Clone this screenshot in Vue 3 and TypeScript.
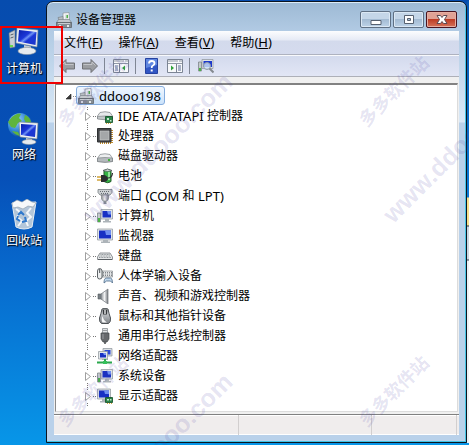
<script setup lang="ts">
interface Device {
  icon: string
  label: string
}

const shortcuts: Device[] = [
  { icon: 'desk-computer', label: '计算机' },
  { icon: 'desk-network', label: '网络' },
  { icon: 'desk-trash', label: '回收站' },
]

const menus = [
  { label: '文件', key: 'F' },
  { label: '操作', key: 'A' },
  { label: '查看', key: 'V' },
  { label: '帮助', key: 'H' },
]

const devices: Device[] = [
  { icon: 'ide', label: 'IDE ATA/ATAPI 控制器' },
  { icon: 'cpu', label: '处理器' },
  { icon: 'disk', label: '磁盘驱动器' },
  { icon: 'battery', label: '电池' },
  { icon: 'port', label: '端口 (COM 和 LPT)' },
  { icon: 'computer', label: '计算机' },
  { icon: 'monitor', label: '监视器' },
  { icon: 'keyboard', label: '键盘' },
  { icon: 'hid', label: '人体学输入设备' },
  { icon: 'sound', label: '声音、视频和游戏控制器' },
  { icon: 'mouse', label: '鼠标和其他指针设备' },
  { icon: 'usb', label: '通用串行总线控制器' },
  { icon: 'netcard', label: '网络适配器' },
  { icon: 'computer', label: '系统设备' },
  { icon: 'display', label: '显示适配器' },
]

// Latin runs are set one size larger than the Chinese text around them
function runs(label: string): { text: string; latin: boolean }[] {
  return (label.match(/[\x20-\x7e]+|[^\x20-\x7e]+/g) ?? []).map((text) => ({
    text,
    latin: /^[\x20-\x7e]/.test(text),
  }))
}
</script>

<template>
  <div class="desktop">
    <svg class="defs" aria-hidden="true">
      <defs>
        <linearGradient id="g-screen" x1="0" y1="0" x2="1" y2="1">
          <stop offset="0" stop-color="#0a1fa8" />
          <stop offset=".4" stop-color="#1c37d8" />
          <stop offset=".5" stop-color="#6f93f4" />
          <stop offset=".6" stop-color="#1c37d8" />
          <stop offset="1" stop-color="#1a36c8" />
        </linearGradient>
        <linearGradient id="g-metal" x1="0" y1="0" x2="1" y2="0">
          <stop offset="0" stop-color="#8b8f94" />
          <stop offset=".5" stop-color="#f1f2f3" />
          <stop offset="1" stop-color="#74787d" />
        </linearGradient>
        <linearGradient id="g-grey" x1="0" y1="0" x2="0" y2="1">
          <stop offset="0" stop-color="#e6e8ea" />
          <stop offset="1" stop-color="#7d8287" />
        </linearGradient>
        <radialGradient id="g-globe" cx=".35" cy=".3" r=".8">
          <stop offset="0" stop-color="#9fd8ff" />
          <stop offset=".6" stop-color="#2b7fd0" />
          <stop offset="1" stop-color="#0d3f86" />
        </radialGradient>
      </defs>
      <symbol id="i-desk-computer" viewBox="0 0 32 32">
        <path d="M1 6l6-3v17l-5 1z" fill="#c9ced3" stroke="#6e757c" stroke-width=".6" />
        <path d="M2.500 8l3-1M2.500 11l3-1" stroke="#5c646c" />
        <path d="M2 18h3v2H2z" fill="#69d84c" />
        <path d="M9 1l21 2-1 17L8 16z" fill="#e9eef3" stroke="#7d8894" stroke-width=".6" />
        <path d="M11 3l17.500 2-1 13L10 14.500z" fill="url(#g-screen)" />
        <path d="M16 18l7 1.500v4h-7z" fill="#c5ccd4" />
        <ellipse cx="19" cy="24" rx="9" ry="3.600" fill="#e7ebef" stroke="#8d969f" stroke-width=".6" />
      </symbol>
      <symbol id="i-desk-network" viewBox="0 0 32 32">
        <circle cx="12" cy="12" r="12" fill="url(#g-globe)" />
        <path d="M4 4q6-5 9-3l-2 4 3 3-4 2-3 5-4-1-3-5zM17 2q5 2 6 7l-5 1-2-4zM4 18l6 1 2 4q-5-1-8-5z" fill="#5fb53c" />
        <path d="M11 9l19 1-1 16-17-2z" fill="#edf1f4" stroke="#6f7a86" stroke-width=".6" />
        <path d="M13 11l15 1-1 12-14-2z" fill="url(#g-screen)" />
        <path d="M18 25l6 1v3h-6z" fill="#c5ccd4" />
        <ellipse cx="21" cy="29" rx="7" ry="2.500" fill="#e7ebef" stroke="#8d969f" stroke-width=".6" />
      </symbol>
      <symbol id="i-desk-trash" viewBox="0 0 32 32">
        <path d="M4 4l24-1-4 25q-8 4-16 0z" fill="#c6d2dc" fill-opacity=".9" stroke="#e7eef4" />
        <path d="M4 4l5-3 5 2 5-3 5 3 4 1-3 4-5-1-5 3-5-2-5 1z" fill="#f6f8fa" stroke="#8c9aa7" stroke-width=".6" />
        <path d="M8 10l4 3-3 5 5 4-4 5M23 9l-4 5 4 4-5 4 2 5" stroke="#f4f7fa" stroke-width="2" fill="none" />
        <path d="M10 16l3-3 3 3M17 18l1 4-4 1M12 22l-3-2 1-3" stroke="#2f78cc" stroke-width="2" fill="none" />
      </symbol>
      <symbol id="i-manager" viewBox="0 0 16 16">
        <path d="M7 1l6-.5.500 8H7z" fill="#f3f5f6" stroke="#8b9298" stroke-width=".7" />
        <path d="M9 2.500h3v5H9z" fill="#d8dde0" />
        <path d="M10.500 3h1.500v3h-1.500z" fill="#4fb247" />
        <path d="M2 5.500l5-1v4H3z" fill="#b8bec3" stroke="#71787e" stroke-width=".6" />
        <path d="M2.500 7.500h11l2 3H.5z" fill="#c4c9cd" stroke="#72797f" stroke-width=".6" />
        <path d="M.5 10.500h15v5H.5z" fill="#868d93" stroke="#545b61" stroke-width=".7" />
        <path d="M2 11.500h12" stroke="#c9ced2" />
        <path d="M3 13h2v2H3zM11 13h2v2h-2z" fill="#e5e8ea" />
      </symbol>
      <symbol id="i-ide" viewBox="0 0 16 16">
        <path d="M3 4.500q5-1.500 10 0L15.500 8v2.500q-7.500 1.500-15 0V8z" fill="#e6e8ea" stroke="#85898d" stroke-width=".8" />
        <path d="M.5 8.500q7.500-1 15 0v2.500q-7.500 1.500-15 0z" fill="#c3c7ca" stroke="#777c80" stroke-width=".6" />
        <path d="M8.500 8.500h7v6h-7z" fill="#288447" stroke="#0f4a23" stroke-width=".8" />
        <path d="M10 10h2v2h-2zM13 12h1.500v1.500H13z" fill="#c7e8cd" />
        <path d="M9 15.500h5" stroke="#d0a63a" stroke-dasharray="1 1" />
      </symbol>
      <symbol id="i-cpu" viewBox="0 0 16 16">
        <path d="M15 2v13H2" fill="none" stroke="#c08a28" stroke-width="2" stroke-dasharray="1 1" />
        <path d="M.5.5h13.500V14H.5z" fill="#45474a" stroke="#2f3133" />
        <path d="M3 3h9v9H3z" fill="#a4a7a9" stroke="#cfd1d2" stroke-width=".6" />
      </symbol>
      <symbol id="i-disk" viewBox="0 0 16 16">
        <path d="M3 6.500q5-1.500 10 0l2.500 4v3q-7.500 1.500-15 0v-3z" fill="#eceeef" stroke="#8a8f93" stroke-width=".8" />
        <path d="M.5 10q7.500-1 15 0v3.500q-7.500 1.500-15 0z" fill="#b5babd" stroke="#72777b" stroke-width=".6" />
        <path d="M11 11h2v2h-2z" fill="#43b53d" />
      </symbol>
      <symbol id="i-battery" viewBox="0 0 16 16">
        <path d="M7 2.500q4-2.500 7 0v11q-3 2.500-7 0z" fill="#35b344" stroke="#245b2b" />
        <path d="M6 2.500q4.500-3 9 0-4 2-9 0z" fill="#d9dddf" stroke="#4b5155" stroke-width=".7" />
        <path d="M12 4v8" stroke="#b5f3b6" stroke-width="1.500" />
        <path d="M0 9h4M0 12h4" stroke="#d0a239" stroke-width="1.400" />
        <path d="M4 7h3q4 1 4 3.500T7 14H4z" fill="#2c2e30" />
        <path d="M11 10q4 0 4.500-5" stroke="#2c2e30" stroke-width="1.200" fill="none" />
      </symbol>
      <symbol id="i-port" viewBox="0 0 16 16">
        <path d="M1 1.500h14v3l-2 2.500H3L1 4.500z" fill="#cdd1d4" stroke="#777d82" stroke-width=".8" />
        <path d="M3 3.500h10M4 5.500h8" stroke="#686e73" stroke-dasharray="1 1" />
        <path d="M4.500 7h7v4L10 13H6l-1.500-2z" fill="url(#g-metal)" stroke="#73797e" stroke-width=".6" />
        <path d="M8 13v3" stroke="#8a9095" stroke-width="3" />
      </symbol>
      <symbol id="i-computer" viewBox="0 0 16 16">
        <path d="M.5 5h3v9h-3z" fill="#c5cacd" stroke="#737b80" stroke-width=".7" />
        <path d="M1 10h2v4H1z" fill="#4bb245" />
        <path d="M4 1.500h11.500V11H4z" fill="#dfe3e7" stroke="#8c949a" stroke-width=".7" />
        <path d="M5.500 3h8.500v6.500H5.500z" fill="#1730c4" />
        <path d="M10 3h4v3.500h-3z" fill="#6f8ff0" />
        <path d="M8 11h4v2H8zM6 13h8v1.500H6z" fill="#adb4b9" />
      </symbol>
      <symbol id="i-monitor" viewBox="0 0 16 16">
        <path d="M.5 1h15v11H.5z" fill="#dfe3e7" stroke="#8c949a" stroke-width=".7" />
        <path d="M2 2.500h12v8H2z" fill="#1730c4" />
        <path d="M8 2.500h6V7H9z" fill="#6f8ff0" />
        <path d="M6 12h5v1.500H6zM4 13.500h9V15H4z" fill="#adb4b9" />
      </symbol>
      <symbol id="i-keyboard" viewBox="0 0 16 16">
        <path d="M3 5h10l2.500 4v2.500H.5V9z" fill="#e5e7e8" stroke="#777c80" stroke-width=".8" />
        <path d="M3.500 6.500h9M2.500 8h11M2 9.500h12" stroke="#8f9498" stroke-dasharray="1 .6" />
        <path d="M1 11.500h14" stroke="#5a5f63" />
      </symbol>
      <symbol id="i-hid" viewBox="0 0 16 16">
        <path d="M5 3h10.500v6H5z" fill="#e3e5e6" stroke="#858a8e" stroke-width=".7" />
        <path d="M6 4.500h9M6 6h9M6 7.500h9" stroke="#81868a" stroke-dasharray="1 1" />
        <path d="M.5 3q0-2.500 2.200-2.500T5 3v6q0 2-2.300 2T.5 9z" fill="#eceeef" stroke="#4d5256" stroke-width=".9" />
        <path d="M2.700 1v4" stroke="#4d5256" />
        <path d="M7 15q0-5 2.500-5h4q2 0 2 5l-2-2h-4z" fill="#c2d8ec" stroke="#4b6a88" stroke-width=".8" />
      </symbol>
      <symbol id="i-sound" viewBox="0 0 16 16">
        <path d="M1 6h4v5H1z" fill="#777e83" stroke="#555b60" stroke-width=".6" />
        <path d="M4 6l7-5v15l-7-5z" fill="url(#g-metal)" stroke="#70767b" stroke-width=".7" />
      </symbol>
      <symbol id="i-mouse" viewBox="0 0 16 16">
        <path d="M5 1q3-1.500 6 0 1 5 2.500 9 .5 4-2 5.500h-7Q2 14 2.500 10q1.500-4 2.500-9z" fill="url(#g-grey)" stroke="#4c5155" />
        <path d="M5.500 1.500h5L10 6.500H6z" fill="#34383b" />
        <path d="M8 2v4" stroke="#e7e9ea" stroke-width="1.400" />
        <path d="M5.500 8q-1.500 4 0 6.500h4.500q-3.500-2-4.500-6.500z" fill="#f5f6f6" />
      </symbol>
      <symbol id="i-usb" viewBox="0 0 16 16">
        <path d="M5.500.5h5V5h-5z" fill="#e0e3e5" stroke="#888e92" stroke-width=".8" />
        <path d="M7 2v1M9 2v1" stroke="#54595d" />
        <path d="M4 5h8v6l-2 3H6l-2-3z" fill="#66696c" stroke="#44474a" stroke-width=".7" />
        <path d="M6 6v5" stroke="#9a9da0" />
        <path d="M8 14v2" stroke="#44474a" stroke-width="1.500" />
      </symbol>
      <symbol id="i-netcard" viewBox="0 0 16 16">
        <path d="M6 .5h9V8H6z" fill="#d9dee3" stroke="#8c949a" stroke-width=".7" />
        <path d="M7.500 2h6v4.500h-6z" fill="#2c49d6" />
        <path d="M1.500 3.500h9V11h-9z" fill="#e3e7ea" stroke="#8c949a" stroke-width=".7" />
        <path d="M3 5h6v4.500H3z" fill="#1730c4" />
        <path d="M6 5h3v2H7z" fill="#7b98f2" />
        <path d="M5 11.500h6" stroke="#a5acb1" />
        <path d="M8 11v3M0 14.500h15" stroke="#2ba84d" stroke-width="2" />
        <path d="M6 13h4v3H6z" fill="#35c05a" />
      </symbol>
      <symbol id="i-display" viewBox="0 0 16 16">
        <path d="M.5 1h13v10H.5z" fill="#dfe3e7" stroke="#8c949a" stroke-width=".7" />
        <path d="M2 2.500h10v7H2z" fill="#1730c4" />
        <path d="M7 2.500h5V6H8z" fill="#6f8ff0" />
        <path d="M5 11h4v2H5zM3 13h6v1.500H3z" fill="#adb4b9" />
        <path d="M8.500 9.500h7v5h-7z" fill="#288447" stroke="#0f4a23" stroke-width=".8" />
        <path d="M10 11h2v1.500h-2zM13 11h1.500v1.500H13z" fill="#c7e8cd" />
        <path d="M10 15.500h5" stroke="#d0a63a" stroke-dasharray="1 1" />
      </symbol>
      <symbol id="i-back" viewBox="0 0 16 16">
        <path d="M.5 8L7 1.500V5h8.500v6H7v3.500z" fill="#9b9da1" stroke="#6f7175" />
        <path d="M2.500 7.500L6 4v2.500h8.500" stroke="#c2c4c8" fill="none" />
      </symbol>
      <symbol id="i-forward" viewBox="0 0 16 16">
        <path d="M15.500 8L9 1.500V5H.5v6H9v3.500z" fill="#9b9da1" stroke="#6f7175" />
        <path d="M13.500 7.500L10 4v2.500H1.500" stroke="#c2c4c8" fill="none" />
      </symbol>
      <symbol id="i-tree" viewBox="0 0 16 16">
        <path d="M.5 1.500h15v13H.5z" fill="#f8f9fb" stroke="#7c8594" />
        <path d="M1 3h10M12 3h3M1 5.500h14" stroke="#9199a6" />
        <path d="M6.500 6v8" stroke="#7c8594" />
        <path d="M2 8h3M2 10h3M2 12h3" stroke="#5b6d94" />
        <path d="M12 7.500v5L9 10z" fill="#31a43a" />
      </symbol>
      <symbol id="i-pane" viewBox="0 0 16 16">
        <path d="M.5 1.500h15v13H.5z" fill="#f8f9fb" stroke="#7c8594" />
        <path d="M1 3h10M12 3h3M1 5.500h14" stroke="#9199a6" />
        <path d="M9.500 6v8" stroke="#7c8594" />
        <path d="M11 8h3M11 10h3M11 12h3" stroke="#5b6d94" />
        <path d="M4 7.500v5L7 10z" fill="#31a43a" />
      </symbol>
      <symbol id="i-help" viewBox="0 0 16 16">
        <path d="M1.500.5h12v15h-12z" fill="#3156c4" stroke="#2542a0" />
        <path d="M2 1h11v6L2 10z" fill="#5f86e0" />
        <path d="M5 5.500q0-2.500 2.700-2.500T10.500 5.300q0 1.500-1.500 2.200T7.700 10" stroke="#fff" stroke-width="1.800" fill="none" />
        <path d="M6.700 11.500h2v2h-2z" fill="#fff" />
      </symbol>
      <symbol id="i-scan" viewBox="0 0 16 16">
        <path d="M.5 4h3v9h-3z" fill="#c5cacd" stroke="#737b80" stroke-width=".7" />
        <path d="M1 10h2v3H1z" fill="#4bb245" />
        <path d="M4 1.500h11v9H4z" fill="#dfe3e7" stroke="#8c949a" stroke-width=".7" />
        <path d="M5.500 3H14v6H5.500z" fill="#1c39cc" />
        <circle cx="9" cy="8" r="3.500" fill="#cfe4f8" fill-opacity=".8" stroke="#8f99a5" />
        <path d="M11.500 10.500l4 4" stroke="#84898f" stroke-width="2" />
      </symbol>
    </svg>

    <nav class="shortcuts" aria-label="桌面">
      <a v-for="s in shortcuts" :key="s.label" href="#" class="shortcut">
        <svg aria-hidden="true"><use :href="`#i-${s.icon}`" /></svg>
        <span>{{ s.label }}</span>
      </a>
    </nav>

    <main class="window">
      <header class="titlebar">
        <svg class="icon" aria-hidden="true"><use href="#i-manager" /></svg>
        <h1>设备管理器</h1>
        <div class="controls">
          <button type="button" aria-label="最小化">
            <svg viewBox="0 0 16 14"><path d="M3 7.500h10v4H3z" fill="#fff" stroke="#566170" /></svg>
          </button>
          <button type="button" aria-label="最大化">
            <svg viewBox="0 0 16 14">
              <path d="M3.500 2.500h9v8h-9z" fill="#fff" stroke="#566170" />
              <path d="M6.500 5.500h3v2h-3z" fill="#a9bfd6" stroke="#566170" />
            </svg>
          </button>
          <button type="button" class="close" aria-label="关闭">
            <svg viewBox="0 0 16 14">
              <path d="M3 2.500h3.500L8 4.500l1.500-2H13L10.500 6.500l2.500 4H9.500L8 8.500l-1.500 2H3l2.500-4z" fill="#fff" stroke="#5c4a52" />
            </svg>
          </button>
        </div>
      </header>

      <div class="client">
        <nav class="menubar">
          <button v-for="m in menus" :key="m.key" type="button">
            {{ m.label }}<span class="latin">(<u>{{ m.key }}</u>)</span>
          </button>
        </nav>

        <div class="toolbar">
          <div class="group arrows">
            <button type="button" aria-label="后退"><svg class="icon"><use href="#i-back" /></svg></button>
            <button type="button" aria-label="前进"><svg class="icon"><use href="#i-forward" /></svg></button>
          </div>
          <div class="group">
            <button type="button" aria-label="显示控制台树"><svg class="icon"><use href="#i-tree" /></svg></button>
          </div>
          <div class="group">
            <button type="button" aria-label="帮助"><svg class="icon"><use href="#i-help" /></svg></button>
            <button type="button" aria-label="操作窗格"><svg class="icon"><use href="#i-pane" /></svg></button>
          </div>
          <div class="group">
            <button type="button" aria-label="扫描检测硬件改动"><svg class="icon"><use href="#i-scan" /></svg></button>
          </div>
        </div>

        <section class="tree" role="tree" aria-label="设备">
          <div class="root" role="treeitem" aria-expanded="true">
            <svg class="expander" viewBox="0 0 12 20" aria-hidden="true">
              <path d="M7 8v5H2z" fill="#3b3b3b" stroke="#1e1e1e" stroke-width=".6" />
              <path d="M9 10.500h1M11 10.500h1" stroke="#888" />
            </svg>
            <span class="selected">
              <svg class="icon" aria-hidden="true"><use href="#i-manager" /></svg>
              <span class="latin">ddooo198</span>
            </span>
          </div>
          <ul role="group">
            <li v-for="d in devices" :key="d.label" role="treeitem" aria-expanded="false">
              <svg class="expander" viewBox="0 0 12 20" aria-hidden="true">
                <path d="M2 1.500h1M2 3.500h1M2 17.500h1M2 19.500h1M8 10.500h1M10 10.500h1" stroke="#777" />
                <path d="M.5 6.500l5 4-5 4z" fill="#fff" stroke="#a0a0a0" />
              </svg>
              <svg class="icon" aria-hidden="true"><use :href="`#i-${d.icon}`" /></svg>
              <span class="label"><span v-for="(r, i) in runs(d.label)" :key="i" :class="{ latin: r.latin }">{{ r.text }}</span></span>
            </li>
          </ul>
        </section>

        <footer class="status"><span></span><span></span><span></span></footer>
      </div>
    </main>

    <aside class="behind" aria-hidden="true"></aside>

    <div class="highlight"></div>
    <div class="marks" aria-hidden="true">
      <span class="mark name m1">多多软件站</span>
      <span class="mark name m2">多多软件站</span>
      <span class="mark name m3">多多软件站</span>
      <span class="mark name m4">多多软件站</span>
      <span class="mark site m5">www.ddooo.com</span>
      <span class="mark site m6">www.ddooo.com</span>
      <span class="mark site m7">www.ddooo.com</span>
    </div>
  </div>
</template>

<style>
body {
  margin: 0;
}
</style>

<style scoped>
.desktop {
  position: relative;
  display: flex;
  box-sizing: border-box;
  min-height: 100vh;
  padding: 1px 0 2px;
  overflow: hidden;
  background: linear-gradient(#064cae 0%, #0650b8 40%, #0768cc 60%, #0796e8 100%);
  color: #000;
  font: 12px/20px "Noto Sans", "Noto Sans CJK SC", sans-serif;
}
.defs {
  position: absolute;
  width: 0;
  height: 0;
}
button {
  padding: 0;
  border: 0;
  background: none;
  color: inherit;
  font: inherit;
}
.icon {
  flex: none;
  display: block;
  width: 16px;
  height: 16px;
}
.latin {
  font-size: 13px;
  white-space: pre;
}
.shortcuts {
  flex: none;
  display: flex;
  flex-direction: column;
  gap: 34px;
  box-sizing: border-box;
  width: 46px;
  padding: 26px 0 0 2px;
}
.shortcut {
  display: flex;
  flex-direction: column;
  align-items: center;
  color: #fff;
  text-decoration: none;
  text-shadow: 1px 1px 1px #000, 0 0 2px #001b4d;
  white-space: nowrap;
}
.shortcut svg {
  width: 32px;
  height: 32px;
}
.window {
  flex: 1;
  display: flex;
  flex-direction: column;
  min-width: 0;
  padding: 0 7px 7px;
  border: 1px solid #0b1420;
  border-radius: 7px 7px 0 0;
  background: linear-gradient(#9db9d4, #b2cbe4 30px, #dae9f7 120px, #b9d1ea 121px);
  box-shadow: inset 0 1px #dcebf7, inset -1px -1px #45c4e4;
}
.titlebar {
  display: flex;
  align-items: center;
  height: 29px;
  padding: 0 2px 0 2px;
}
.titlebar .icon {
  margin-top: 6px;
}
h1 {
  flex: 1;
  margin: 6px 0 0 4px;
  font: inherit;
}
.controls {
  display: flex;
  gap: 2px;
  margin-top: 6px;
}
.controls button {
  display: flex;
  align-items: center;
  justify-content: center;
  box-sizing: border-box;
  width: 31px;
  height: 17px;
  border: 1px solid #5f7084;
  border-radius: 2px;
  background: linear-gradient(#c4d6e8 45%, #a3bbd3 50%, #bdd3e8);
  box-shadow: inset 0 0 0 1px #dbe8f4;
}
.controls svg {
  flex: none;
  width: 16px;
  height: 14px;
}
.controls .close {
  border-color: #4a1420;
  background: linear-gradient(#e0a295 45%, #bd3c25 50%, #d5735a);
  box-shadow: inset 0 0 0 1px #e6aea2;
}
.client {
  flex: 1;
  display: flex;
  flex-direction: column;
  background: #f0f0f0;
}
.menubar {
  display: flex;
  gap: 16px;
  height: 23px;
  padding-left: 10px;
  border-bottom: 1px solid #aeb2bf;
  background: linear-gradient(#fcfdfe, #e6eaf5 9px, #d3daec 10px, #d5dbee);
}
.menubar button {
  white-space: nowrap;
}
.toolbar {
  display: flex;
  align-items: center;
  height: 20px;
  border-top: 1px solid #f8f9fc;
  border-bottom: 1px solid #aeb0b8;
  background: linear-gradient(#d3daed, #e2e6f5);
}
.group {
  display: flex;
  gap: 7px;
  padding: 0 6px 0 8px;
  border-right: 1px solid #7f8694;
}
.group.arrows {
  padding: 0 6px 0 5px;
}
.group:last-child {
  border: 0;
}
.tree {
  flex: 1;
  margin: 6px 1px 0;
  padding: 1px 0 0 8px;
  border: 1px solid #8a8a8a;
  border-top: 2px solid #828282;
  border-right-color: #dcdcdc;
  border-bottom-color: #dcdcdc;
  background: #fff;
}
.root {
  display: flex;
  height: 20px;
}
.expander {
  flex: none;
  display: block;
  width: 12px;
  height: 20px;
}
.selected {
  display: flex;
  align-items: center;
  gap: 5px;
  box-sizing: border-box;
  height: 19px;
  padding: 0 3px 0 1px;
  border: 1px solid #84acdd;
  border-radius: 3px;
  background: linear-gradient(#f0f7fe, #cbe2fb);
}
ul {
  margin: 0;
  padding: 0 0 0 21px;
  list-style: none;
}
li {
  display: flex;
  align-items: center;
  height: 20px;
  white-space: nowrap;
}
.label {
  display: flex;
  margin-left: 5px;
}
.status {
  display: grid;
  grid-template-columns: 185px 133px 1fr;
  height: 20px;
  margin-top: 2px;
  padding-right: 2px;
  border-top: 1px solid #808080;
  background: #f0eded;
  box-shadow: inset 0 1px #fff, inset 0 -1px #fff;
}
.status span {
  border-right: 1px solid #d2cfcf;
}
.behind {
  flex: none;
  width: 2px;
  background: linear-gradient(#0757b0, #0a78d6 196px, #f7df8c 197px 224px, #24364d 225px, #cdd7e2 226px 258px, #33404d 259px, #eef1f5 260px);
}
.highlight {
  position: absolute;
  top: 26px;
  left: 0;
  box-sizing: border-box;
  width: 63px;
  height: 58px;
  border: 2px solid #f00000;
}
.marks {
  position: absolute;
  inset: 0;
  overflow: hidden;
  pointer-events: none;
}
.mark {
  position: absolute;
  transform: rotate(-45deg);
  transform-origin: 0 50%;
  color: rgba(70, 60, 160, 0.15);
  white-space: nowrap;
}
.name {
  font: 700 18px/20px "Noto Sans CJK SC", sans-serif;
}
.site {
  font: 700 25px/30px "Liberation Sans", sans-serif;
}
.m1 { left: 60px; top: 112px; }
.m2 { left: 361px; top: 112px; }
.m3 { left: 60px; top: 412px; }
.m4 { left: 361px; top: 412px; }
.m5 { left: 87px; top: 203px; }
.m6 { left: 387px; top: 203px; }
.m7 { left: 87px; top: 503px; }
</style>
